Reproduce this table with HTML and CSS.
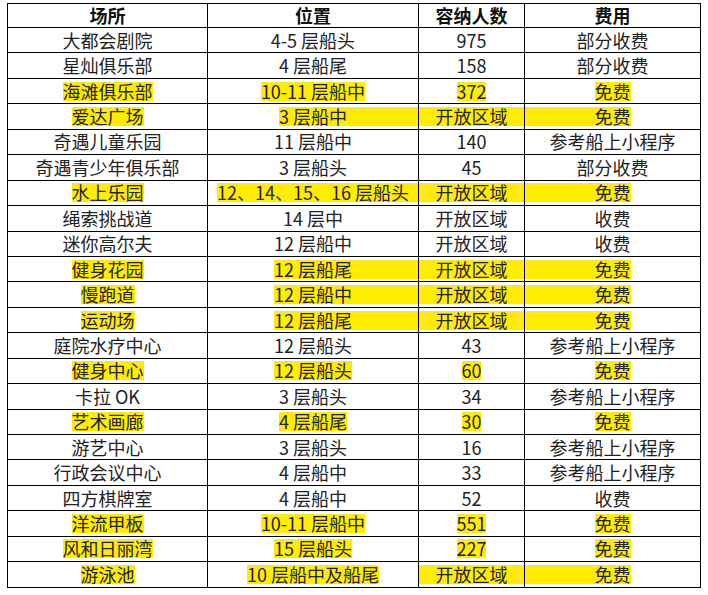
FILE: index.html
```html
<!DOCTYPE html>
<html lang="zh-CN">
<head>
<meta charset="utf-8">
<title>场所</title>
<link rel="stylesheet" href="styles.css">
</head>
<body>
<table class="venues">
  <colgroup>
    <col class="c1"><col class="c2"><col class="c3"><col class="c4">
  </colgroup>
  <thead>
    <tr><th>场所</th><th>位置</th><th>容纳人数</th><th>费用</th></tr>
  </thead>
  <tbody>
    <tr><td>大都会剧院</td><td>4-5 层船头</td><td>975</td><td>部分收费</td></tr>
    <tr><td>星灿俱乐部</td><td>4 层船尾</td><td>158</td><td>部分收费</td></tr>
    <tr><td><span class="hl">海滩俱乐部</span></td><td><span class="hl">10-11 层船中</span></td><td><span class="hl">372</span></td><td><span class="hl">免费</span></td></tr>
    <tr><td><span class="hl">爱达广场</span></td><td><div class="hl-r">3 层船中</div></td><td><div class="hl-full">开放区域</div></td><td><div class="hl-l">免费</div></td></tr>
    <tr><td>奇遇儿童乐园</td><td>11 层船中</td><td>140</td><td>参考船上小程序</td></tr>
    <tr><td>奇遇青少年俱乐部</td><td>3 层船头</td><td>45</td><td>部分收费</td></tr>
    <tr><td><span class="hl">水上乐园</span></td><td><div class="hl-r">12、14、15、16 层船头</div></td><td><div class="hl-full">开放区域</div></td><td><div class="hl-l">免费</div></td></tr>
    <tr><td>绳索挑战道</td><td>14 层中</td><td>开放区域</td><td>收费</td></tr>
    <tr><td>迷你高尔夫</td><td>12 层船中</td><td>开放区域</td><td>收费</td></tr>
    <tr><td><span class="hl">健身花园</span></td><td><div class="hl-r">12 层船尾</div></td><td><div class="hl-full">开放区域</div></td><td><div class="hl-l">免费</div></td></tr>
    <tr><td><span class="hl">慢跑道</span></td><td><div class="hl-r">12 层船中</div></td><td><div class="hl-full">开放区域</div></td><td><div class="hl-l">免费</div></td></tr>
    <tr><td><span class="hl">运动场</span></td><td><div class="hl-r">12 层船尾</div></td><td><div class="hl-full">开放区域</div></td><td><div class="hl-l">免费</div></td></tr>
    <tr><td>庭院水疗中心</td><td>12 层船头</td><td>43</td><td>参考船上小程序</td></tr>
    <tr><td><span class="hl">健身中心</span></td><td><span class="hl">12 层船头</span></td><td><span class="hl">60</span></td><td><span class="hl">免费</span></td></tr>
    <tr><td>卡拉 OK</td><td>3 层船头</td><td>34</td><td>参考船上小程序</td></tr>
    <tr><td><span class="hl">艺术画廊</span></td><td><span class="hl">4 层船尾</span></td><td><span class="hl">30</span></td><td><span class="hl">免费</span></td></tr>
    <tr><td>游艺中心</td><td>3 层船头</td><td>16</td><td>参考船上小程序</td></tr>
    <tr><td>行政会议中心</td><td>4 层船中</td><td>33</td><td>参考船上小程序</td></tr>
    <tr><td>四方棋牌室</td><td>4 层船中</td><td>52</td><td>收费</td></tr>
    <tr><td><span class="hl">洋流甲板</span></td><td><span class="hl">10-11 层船中</span></td><td><span class="hl">551</span></td><td><span class="hl">免费</span></td></tr>
    <tr><td><span class="hl">风和日丽湾</span></td><td><span class="hl">15 层船头</span></td><td><span class="hl">227</span></td><td><span class="hl">免费</span></td></tr>
    <tr><td><span class="hl">游泳池</span></td><td><span class="hl">10 层船中及船尾</span></td><td><div class="hl-full">开放区域</div></td><td><div class="hl-l">免费</div></td></tr>
  </tbody>
</table>
</body>
</html>
```
FILE: styles.css
```css
html, body {
  margin: 0;
  padding: 0;
  background: #fff;
}

body {
  padding: 3px 0 0 7px;
  font-family: "Noto Sans CJK SC", "Noto Sans", sans-serif;
  font-size: 18px;
  color: #222;
}

.venues {
  border-collapse: collapse;
  table-layout: fixed;
  width: 693px;
}

.c1 { width: 200px; }
.c2 { width: 211px; }
.c3 { width: 106px; }
.c4 { width: 176px; }

.venues th,
.venues td {
  border: 1px solid #000;
  padding: 0;
  text-align: center;
  vertical-align: middle;
  line-height: 19px;
  white-space: nowrap;
}

.venues th {
  font-weight: 700;
  color: #111;
  height: 23px;
}

.venues td {
  height: 24.45px;
}

.hl {
  display: inline-block;
  background: #ffec00;
  line-height: 19px;
}

.hl-full {
  background: #ffec00;
  line-height: 19px;
}

.hl-r,
.hl-l {
  display: flex;
  background: #ffec00;
  line-height: 19px;
}

.hl-r::before,
.hl-r::after,
.hl-l::before,
.hl-l::after {
  content: "";
  flex: 1;
}

.hl-r::before,
.hl-l::after {
  background: #fff;
}
```
